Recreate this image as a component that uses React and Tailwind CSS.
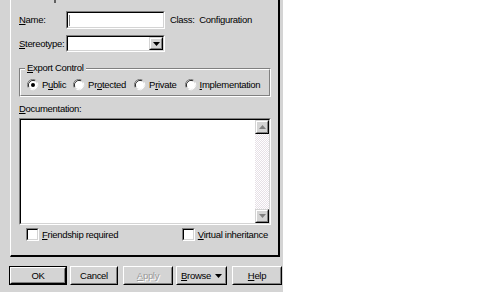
import React from "react";

const F = { fontFamily: '"Liberation Sans", Arial, sans-serif' };

function U({ children }) {
  return <span className="underline underline-offset-[1px]">{children}</span>;
}

function Radio({ checked }) {
  return (
    <svg width="12" height="12" viewBox="0 0 12 12" className="shrink-0">
      <path d="M1 8.5 A5.5 5.5 0 0 1 8.5 1" stroke="#808080" strokeWidth="1" fill="none" />
      <path d="M2 8 A4.5 4.5 0 0 1 8 2" stroke="#000" strokeWidth="1" fill="none" />
      <circle cx="6" cy="6" r="4" fill="#fff" />
      <path d="M3.5 10.5 A5.5 5.5 0 0 0 10.5 3.5" stroke="#fff" strokeWidth="1" fill="none" />
      {checked && <circle cx="6" cy="6" r="2" fill="#000" />}
    </svg>
  );
}

function Check() {
  return (
    <div className="w-[13px] h-[13px] shrink-0 border border-t-[#808080] border-l-[#808080] border-b-white border-r-white">
      <div className="w-full h-full bg-white border border-t-black border-l-black border-b-[#d4d4d4] border-r-[#d4d4d4]" />
    </div>
  );
}

function Sunken({ className, children }) {
  return (
    <div className={"border border-t-[#808080] border-l-[#808080] border-b-white border-r-white " + className}>
      <div className="w-full h-full bg-white border border-t-black border-l-black border-b-[#d4d4d4] border-r-[#d4d4d4] flex">
        {children}
      </div>
    </div>
  );
}

function SmallBtn({ children, className = "" }) {
  return (
    <div className={"bg-[#d4d4d4] border border-t-[#d4d4d4] border-l-[#d4d4d4] border-b-black border-r-black " + className}>
      <div className="w-full h-full border border-t-white border-l-white border-b-[#808080] border-r-[#808080] flex items-center justify-center">
        {children}
      </div>
    </div>
  );
}

function Btn({ children, def, disabled, w }) {
  return (
    <div className={(def ? "border border-black " : "") + w + " h-[19px]"}>
      <div className="w-full h-full border border-t-white border-l-white border-b-black border-r-black">
        <div className={"w-full h-full border border-t-[#d4d4d4] border-l-[#d4d4d4] border-b-[#808080] border-r-[#808080] flex items-center justify-center " + (disabled ? "text-[#9a9a9a]" : "text-black")}>
          {children}
        </div>
      </div>
    </div>
  );
}

export default function App() {
  return (
    <div className="w-[504px] h-[298px] bg-white" style={F}>
      <div className="w-[283px] h-[292px] bg-[#d4d4d4] text-[9.5px] tracking-[-0.3px] text-black leading-none flex flex-col whitespace-nowrap">
        <div className="relative ml-[10px] w-[270px] h-[257px] border-l border-l-white border-r-2 border-r-black border-b-2 border-b-black">
          <div className="absolute left-[43px] top-0 w-[2px] h-[3px] bg-[#606060]" />
          <div className="pl-[8px] pr-[8px] pt-[11px] flex flex-col">
            {/* Name row */}
            <div className="flex items-center h-[18px]">
              <div className="w-[47px]"><U>N</U>ame:</div>
              <Sunken className="w-[99px] h-[18px] bg-white">
                <div className="ml-[1px] mt-[2px] w-[1px] h-[11px] bg-[#808080]" />
              </Sunken>
              <div className="ml-[5px]">Class:&nbsp; Configuration</div>
            </div>
            {/* Stereotype row */}
            <div className="flex items-center h-[17px] mt-[6px]">
              <div className="w-[47px]"><U>S</U>tereotype:</div>
              <Sunken className="w-[99px] h-[17px]">
                <div className="flex-1" />
                <SmallBtn className="w-[14px] h-[13px]">
                  <svg width="7" height="4" viewBox="0 0 7 4"><path d="M0 0H7L3.5 4Z" fill="#000" /></svg>
                </SmallBtn>
              </Sunken>
            </div>
            {/* Export Control */}
            <div className="relative mt-[16px] w-[252px] h-[29px] border border-t-[#808080] border-l-[#808080] border-b-white border-r-white">
              <div className="w-full h-full border border-t-white border-l-white border-b-[#808080] border-r-[#808080] flex items-center pl-[6px] pt-[4px]">
                <div className="flex items-center gap-[2px]"><Radio checked /><span className="ml-[1px]">P<U>u</U>blic</span></div>
                <div className="flex items-center gap-[2px] ml-[7px]"><Radio /><span className="ml-[1px]">Pr<U>o</U>tected</span></div>
                <div className="flex items-center gap-[2px] ml-[8px]"><Radio /><span className="ml-[1px]">P<U>r</U>ivate</span></div>
                <div className="flex items-center gap-[2px] ml-[8px]"><Radio /><span className="ml-[1px]"><U>I</U>mplementation</span></div>
              </div>
              <div className="absolute left-[5px] top-[-6px] px-[2px] bg-[#d4d4d4]"><U>E</U>xport Control</div>
            </div>
            {/* Documentation */}
            <div className="mt-[7px] h-[11px]"><U>D</U>ocumentation:</div>
            <Sunken className="mt-[3px] w-[252px] h-[107px]">
              <div className="flex-1" />
              <div className="w-[14px] h-full flex flex-col bg-[repeating-conic-gradient(#ffffff_0_25%,#e6e0e6_0_50%)] bg-[length:2px_2px]">
                <SmallBtn className="w-[14px] h-[14px]">
                  <svg width="7" height="4" viewBox="0 0 7 4"><path d="M0 4H7L3.5 0Z" fill="#808080" /></svg>
                </SmallBtn>
                <div className="flex-1" />
                <SmallBtn className="w-[14px] h-[14px]">
                  <svg width="7" height="4" viewBox="0 0 7 4"><path d="M0 0H7L3.5 4Z" fill="#808080" /></svg>
                </SmallBtn>
              </div>
            </Sunken>
            {/* Checkboxes */}
            <div className="mt-[3px] flex items-center h-[13px] pl-[7px] pr-[2px]">
              <Check />
              <span className="ml-[3px]"><U>F</U>riendship required</span>
              <div className="flex-1" />
              <Check />
              <span className="ml-[3px]"><U>V</U>irtual inheritance</span>
            </div>
          </div>
        </div>
        {/* Buttons */}
        <div className="mt-[9px] ml-[9px] flex items-center">
          <Btn def w="w-[58px]">OK</Btn>
          <div className="ml-[3px]"><Btn w="w-[48px]">Cancel</Btn></div>
          <div className="ml-[5px]"><Btn disabled w="w-[50px]"><span className="[text-shadow:1px_1px_0_#fff]"><U>A</U>pply</span></Btn></div>
          <div className="ml-[3px]"><Btn w="w-[51px]"><span><U>B</U>rowse</span><svg className="ml-[4px]" width="7" height="4" viewBox="0 0 7 4"><path d="M0 0H7L3.5 4Z" fill="#000" /></svg></Btn></div>
          <div className="ml-[5px]"><Btn w="w-[50px]"><U>H</U>elp</Btn></div>
        </div>
      </div>
    </div>
  );
}
